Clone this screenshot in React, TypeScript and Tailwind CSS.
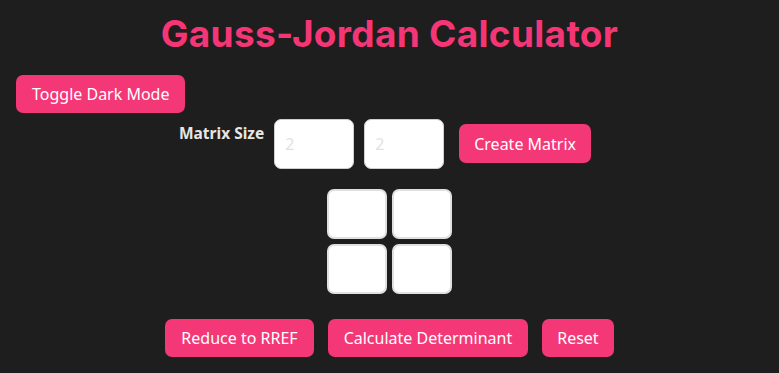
import React from 'react';

const btn =
  "rounded-[7px] bg-[#f43777] px-[15px] h-[38px] text-[16px] text-white font-['Noto_Sans',sans-serif]";

export default function App() {
  const cells = [0, 1, 2, 3];

  return (
    <div className="min-h-screen bg-[#1e1e1e] px-4 font-['Noto_Sans',sans-serif]">
      <h1 className="pt-[10px] text-center font-['Inter',sans-serif] text-[37px] font-bold leading-[48px] tracking-[0.3px] text-[#f53676]">
        Gauss-Jordan Calculator
      </h1>

      <button className={`${btn} mt-[17px] px-[16px]`}>Toggle Dark Mode</button>

      <div className="mt-[6px] flex items-start justify-center gap-[10px] pr-[9px]">
        <span className="mt-[3px] text-[15.5px] font-bold text-[#e6e6e6]">Matrix Size</span>
        <input
          placeholder="2"
          className="h-[50px] w-[80px] rounded-[7px] border border-[#cfcfcf] bg-white px-[10px] text-[16px] placeholder:text-[#e2e2e2]"
        />
        <input
          placeholder="2"
          className="h-[50px] w-[80px] rounded-[7px] border border-[#cfcfcf] bg-white px-[10px] text-[16px] placeholder:text-[#e2e2e2]"
        />
        <button className={`${btn} ml-[5px] mt-[5px] h-[39px]`}>Create Matrix</button>
      </div>

      <div className="mt-[20px] flex justify-center">
        <div className="grid grid-cols-2 gap-[5px]">
          {cells.map(i => (
            <input
              key={i}
              className="h-[50px] w-[60px] rounded-[7px] border-2 border-[#e0e0e0] bg-white"
            />
          ))}
        </div>
      </div>

      <div className="mt-[25px] flex justify-center gap-[14px]">
        <button className={`${btn} px-[16px]`}>Reduce to RREF</button>
        <button className={`${btn} px-[16px]`}>Calculate Determinant</button>
        <button className={btn}>Reset</button>
      </div>
    </div>
  );
}
